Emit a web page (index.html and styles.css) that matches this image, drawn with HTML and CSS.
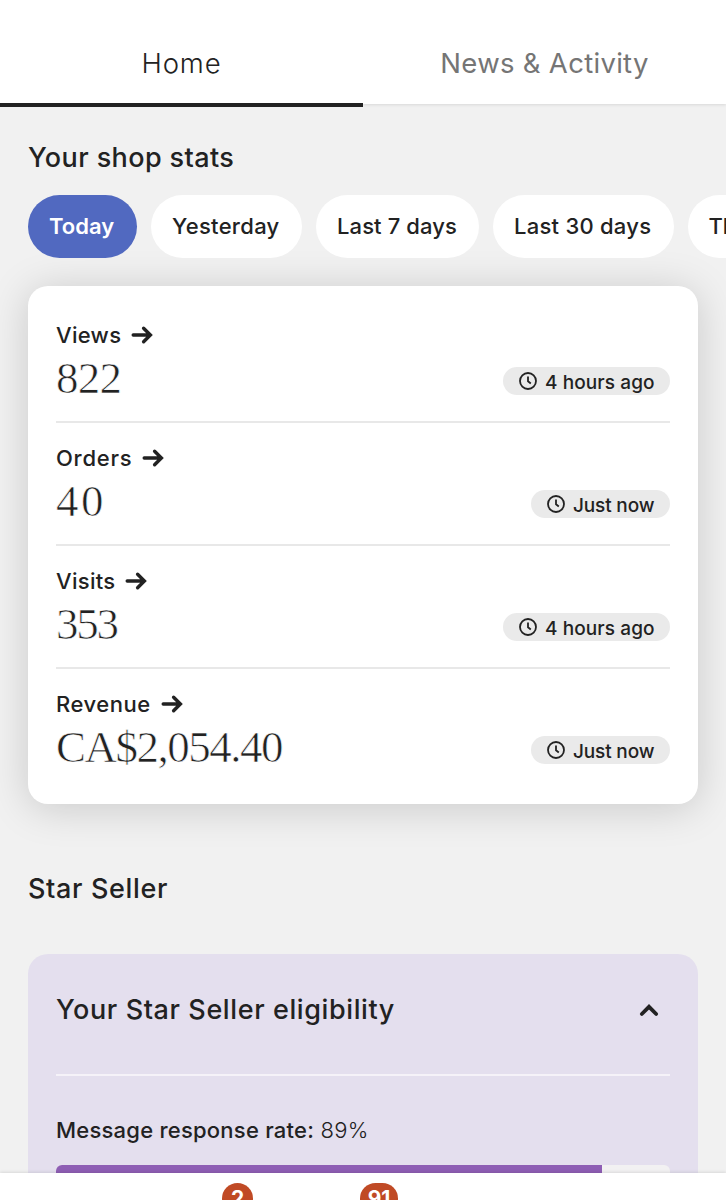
FILE: index.html
```
<!DOCTYPE html>
<html lang="en">
<head>
  <meta charset="UTF-8">
  <meta name="viewport" content="width=device-width, initial-scale=1">
  <title>Shop Manager</title>
  <link rel="stylesheet" href="styles.css">
</head>
<body>
  <!-- Shared icons -->
  <svg class="sprite" width="0" height="0">
    <symbol id="arrow" viewBox="0 0 22 20">
      <path d="M2.2 10H19M12.6 3.2L19.4 10L12.6 16.8" fill="none" stroke="currentColor" stroke-width="3.4" stroke-linecap="round" stroke-linejoin="miter"/>
    </symbol>
    <symbol id="clock" viewBox="0 0 18 18">
      <circle cx="9" cy="9" r="8" fill="none" stroke="currentColor" stroke-width="1.8"/>
      <path d="M9 4.5V9.3L11.8 11.5" fill="none" stroke="currentColor" stroke-width="1.8"/>
    </symbol>
  </svg>

  <div class="app">
    <nav class="tabs">
      <a class="tab active"><span class="home">Home</span></a>
      <a class="tab"><span class="news">News &amp; Activity</span></a>
    </nav>

    <main class="content">
      <h2 class="stats-title">Your shop stats</h2>

      <div class="filters">
        <button class="pill selected today">Today</button>
        <button class="pill yesterday">Yesterday</button>
        <button class="pill week">Last 7 days</button>
        <button class="pill month">Last 30 days</button>
        <button class="pill more">This month</button>
      </div>

      <section class="card">
        <div class="stat">
          <div class="label views-label"><span>Views</span><svg class="arrow"><use href="#arrow"/></svg></div>
          <div class="row">
            <span class="value">822</span>
            <span class="time hours"><svg class="clock"><use href="#clock"/></svg><span>4 hours ago</span></span>
          </div>
        </div>
        <div class="stat">
          <div class="label orders-label"><span>Orders</span><svg class="arrow"><use href="#arrow"/></svg></div>
          <div class="row">
            <span class="value orders">40</span>
            <span class="time now"><svg class="clock"><use href="#clock"/></svg><span>Just now</span></span>
          </div>
        </div>
        <div class="stat">
          <div class="label visits-label"><span>Visits</span><svg class="arrow"><use href="#arrow"/></svg></div>
          <div class="row">
            <span class="value visits">353</span>
            <span class="time hours"><svg class="clock"><use href="#clock"/></svg><span>4 hours ago</span></span>
          </div>
        </div>
        <div class="stat">
          <div class="label revenue-label"><span>Revenue</span><svg class="arrow"><use href="#arrow"/></svg></div>
          <div class="row">
            <span class="value revenue">CA$2,054.40</span>
            <span class="time now"><svg class="clock"><use href="#clock"/></svg><span>Just now</span></span>
          </div>
        </div>
      </section>

      <h2 class="seller-title">Star Seller</h2>

      <section class="seller">
        <div class="seller-head">
          <h3>Your Star Seller eligibility</h3>
          <svg class="chevron" viewBox="0 0 20 14"><path d="M2.8 11L10 3.8L17.2 11" fill="none" stroke="currentColor" stroke-width="3.8" stroke-linecap="round"/></svg>
        </div>
        <p class="rate"><b>Message response rate:</b> <span>89%</span></p>
        <div class="progress"><div class="fill" style="width: 89%"></div></div>
      </section>
    </main>

    <footer class="bottom-nav">
      <span class="count">2</span>
      <span class="count wide">91</span>
    </footer>
  </div>
</body>
</html>
```
FILE: styles.css
```
* { box-sizing: border-box; }
body { margin: 0; font-family: Inter, "Liberation Sans", sans-serif; color: #222; background: #f1f1f1; }
h2, h3, p { margin: 0; }
svg { display: block; flex: none; }
.sprite { display: none; }
.app { height: 1200px; display: flex; flex-direction: column; overflow: hidden; }

/* Tabs */
.tabs { display: flex; flex: none; height: 107px; }
.tab { flex: 1; height: 104px; padding-top: 43px; background: #fff; box-shadow: 0 1px 3px rgba(0,0,0,0.1); text-align: center; font-size: 27.5px; line-height: 40px; color: #757575; }
.tab.active { position: relative; height: 107px; color: #222; border-bottom: 4px solid #222; box-shadow: none; }
.home { font-weight: 300; letter-spacing: 0.9px; }
.news { font-weight: 400; letter-spacing: 0.3px; }

.content { flex: 1; min-height: 0; overflow: hidden; padding: 0 28px; }
h2, h3 { font-size: 27px; font-weight: 500; line-height: 36px; white-space: nowrap; }
.stats-title { padding-top: 33px; height: 88px; letter-spacing: 0.4px; }

/* Date filters */
.filters { display: flex; gap: 14px; height: 63px; margin-right: -28px; overflow: hidden; }
.pill { flex: none; height: 63px; padding: 0 21px; border: none; border-radius: 32px; background: #fff; color: #222; font: 500 22px/63px Inter, sans-serif; text-align: left; white-space: nowrap; }
.pill.selected { background: #5169c0; color: #fff; font-weight: 600; }
.today { width: 109px; }
.yesterday { width: 151px; letter-spacing: 0.3px; }
.week { width: 163px; letter-spacing: 0.1px; }
.month { width: 180.5px; letter-spacing: 0.25px; }

/* Stats card */
.card { height: 518px; margin-top: 28px; padding: 14px 28px; background: #fff; border-radius: 20px; box-shadow: 0 4px 40px rgba(0,0,0,0.17); }
.stat { height: 123px; padding-top: 21px; border-bottom: 2px solid #e8e8e8; }
.stat:last-child { border-bottom: none; }
.label { display: flex; align-items: center; gap: 10px; height: 28px; font-size: 22px; font-weight: 500; }
.views-label { letter-spacing: 0.3px; }
.orders-label { letter-spacing: 0.75px; }
.visits-label { letter-spacing: 0.3px; }
.revenue-label { letter-spacing: 0.55px; }
.arrow { width: 22px; height: 20px; }
.row { display: flex; justify-content: space-between; height: 56px; }
/* The surface-coloured stroke slims the numerals down to a light weight */
.value { font-family: "Liberation Serif", serif; font-size: 45px; line-height: 58px; letter-spacing: -0.8px; -webkit-text-stroke: 0.7px #fff; }
.orders { letter-spacing: 2.5px; }
.visits { letter-spacing: -2.2px; }
.revenue { letter-spacing: -1.5px; }
.time { display: flex; align-items: center; gap: 8px; height: 28px; margin-top: 18px; padding-left: 16px; border-radius: 14px; background: #eaeaea; font-size: 19px; font-weight: 500; white-space: nowrap; }
.time span { padding-top: 2px; }
.hours { width: 167px; letter-spacing: 0.1px; }
.now { width: 139px; letter-spacing: -0.15px; }
.clock { width: 18px; height: 18px; }

/* Star Seller */
.seller-title { margin-top: 67px; height: 83px; letter-spacing: 0.65px; }
.seller { height: 400px; padding: 0 28px; background: #e4dfee; border-radius: 20px; }
.seller-head { display: flex; justify-content: space-between; height: 122px; padding: 38px 11px 0 0; border-bottom: 2px solid #f5f2f8; }
.seller-head h3 { letter-spacing: 0.6px; }
.chevron { width: 20px; height: 14px; margin-top: 11px; }
.rate { padding-top: 39px; height: 89px; font-size: 22px; line-height: 30px; white-space: nowrap; letter-spacing: 0.23px; }
.rate b { font-weight: 500; }
.rate span { font-weight: 300; }
.progress { height: 16px; border-radius: 6px; background: #f2f1f2; overflow: hidden; }
.fill { height: 16px; background: #8e5eb4; }

/* Bottom bar */
.bottom-nav { display: flex; flex: none; gap: 107px; height: 27px; padding: 10px 0 0 222px; background: #fff; box-shadow: 0 -1px 3px rgba(0,0,0,0.1); z-index: 1; }
.count { width: 31px; height: 31px; border-radius: 16px; background: #c04a25; color: #fff; font-size: 21px; font-weight: 700; line-height: 31px; text-align: center; }
.wide { width: 38px; }
```
